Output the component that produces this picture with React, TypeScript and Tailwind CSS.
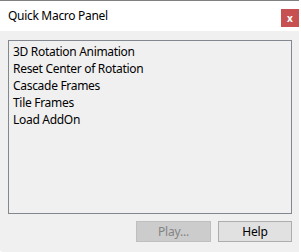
import React from 'react';

const macros = [
  '3D Rotation Animation',
  'Reset Center of Rotation',
  'Cascade Frames',
  'Tile Frames',
  'Load AddOn',
];

export default function App() {
  return (
    <div className="w-[301px] h-[252px] bg-white" style={{ fontFamily: '"Noto Sans", "Open Sans", sans-serif' }}>
      <div className="w-[299px] h-[252px] flex flex-col border-t border-[#808080]">
        {/* title bar */}
        <div className="h-[30px] bg-white flex items-start justify-between pl-2">
          <span className="mt-[8px] text-[12px] leading-[14px] tracking-[-0.3px] text-black">Quick Macro Panel</span>
          <button className="mt-[8px] w-[18px] h-[18px] bg-[#c75050] text-white text-[10px] font-bold leading-none flex items-center justify-center">
            x
          </button>
        </div>

        {/* body */}
        <div className="flex-1 bg-[#f0f0f0] rounded-bl-[3px] px-2 pt-[9px]">
          <div className="w-[284px] h-[174px] border border-[#828790] pl-[4px] pt-[2px]">
            {macros.map((m) => (
              <div key={m} className="text-[12px] leading-[17px] tracking-[-0.3px] text-black whitespace-nowrap">
                {m}
              </div>
            ))}
          </div>

          <div className="mt-[7px] flex justify-end gap-[7px] w-[284px]">
            <button className="w-[75px] h-[21px] bg-[#cccccc] border border-[#bfbfbf] text-[12px] tracking-[-0.2px] text-[#838383]">
              Play...
            </button>
            <button className="w-[74px] h-[21px] bg-[#e1e1e1] border border-[#adadad] text-[12px] tracking-[-0.2px] text-black">
              Help
            </button>
          </div>
        </div>
      </div>
    </div>
  );
}
